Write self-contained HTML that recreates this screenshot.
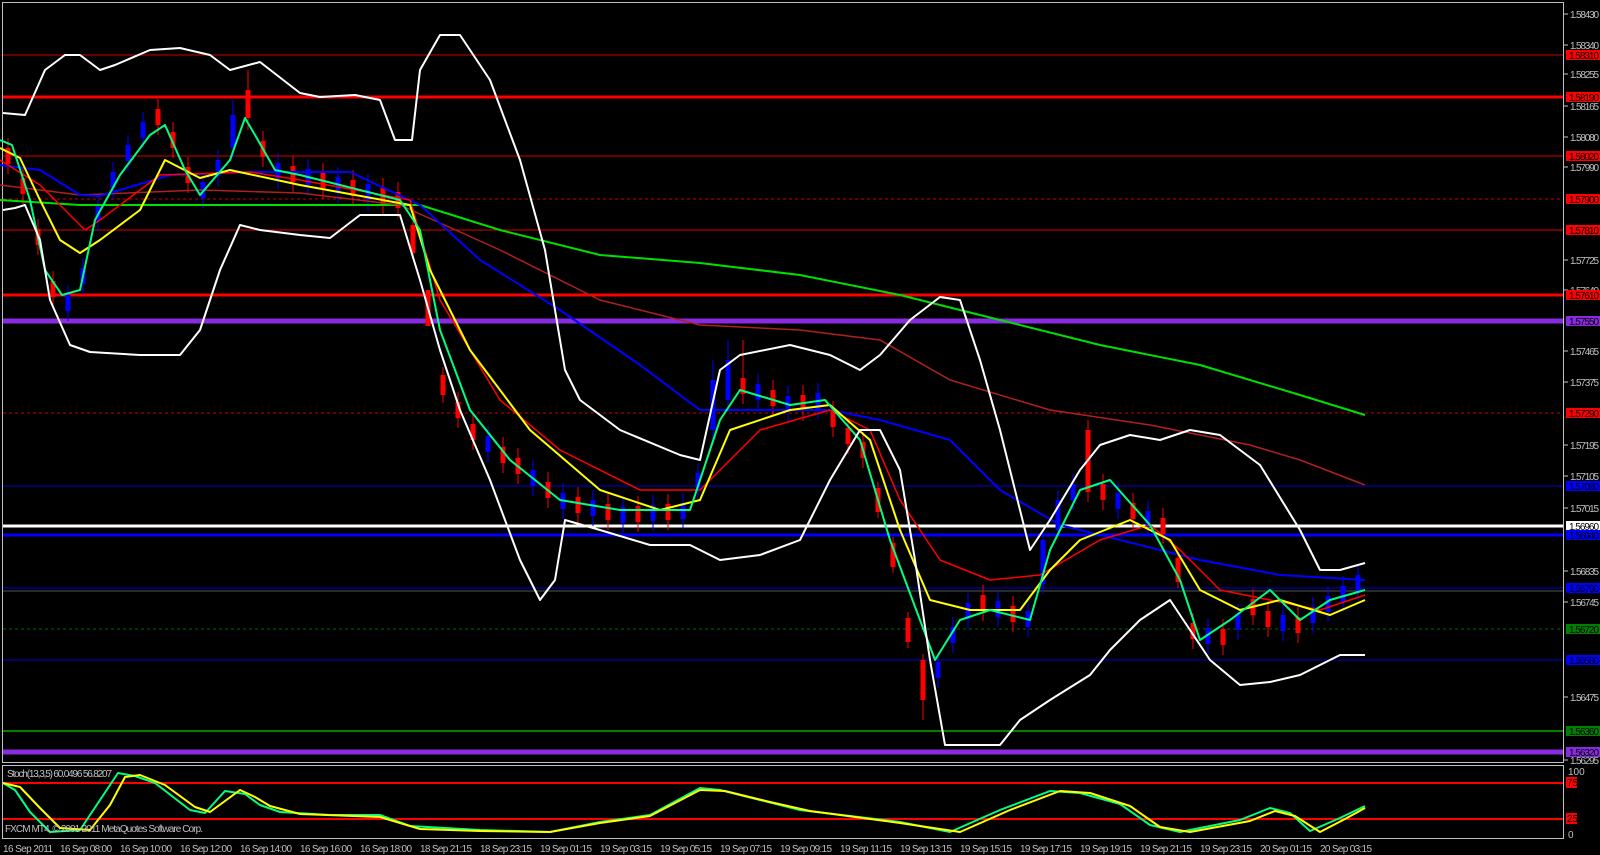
<!DOCTYPE html>
<html><head><meta charset="utf-8"><style>
html,body{margin:0;padding:0;background:#000;width:1600px;height:855px;overflow:hidden}
#w{position:absolute;left:0;top:0;width:1600px;height:855px;overflow:hidden}
svg{display:block}
text{font-family:"Liberation Sans",sans-serif;font-size:10px}
</style></head><body><div id="w">
<svg width="1600" height="855" viewBox="0 0 1600 855" overflow="hidden" xmlns="http://www.w3.org/2000/svg">
<rect width="1600" height="855" fill="#000"/>
<rect x="2.5" y="2.5" width="1561" height="760" fill="none" stroke="#c0c0c0"/>
<rect x="2.5" y="765.5" width="1561" height="73" fill="none" stroke="#c0c0c0"/>
<line x1="3" x2="1563" y1="55" y2="55" stroke="#8b0000" stroke-width="1.5"/>
<line x1="3" x2="1563" y1="97" y2="97" stroke="#ff0000" stroke-width="3"/>
<line x1="3" x2="1563" y1="156" y2="156" stroke="#8b0000" stroke-width="1.5"/>
<line x1="3" x2="1563" y1="199" y2="199" stroke="#c00000" stroke-dasharray="3,3"/>
<line x1="3" x2="1563" y1="230" y2="230" stroke="#e00000"/>
<line x1="3" x2="1563" y1="295" y2="295" stroke="#ff0000" stroke-width="3"/>
<line x1="3" x2="1563" y1="321" y2="321" stroke="#8a2be2" stroke-width="5"/>
<line x1="3" x2="1563" y1="413" y2="413" stroke="#c00000" stroke-dasharray="3,3"/>
<line x1="3" x2="1563" y1="486" y2="486" stroke="#00008b" stroke-width="1.5"/>
<line x1="3" x2="1563" y1="526" y2="526" stroke="#fff" stroke-width="3"/>
<line x1="3" x2="1563" y1="535" y2="535" stroke="#0000ff" stroke-width="3"/>
<line x1="3" x2="1563" y1="588" y2="588" stroke="#00008b" stroke-width="1.5"/>
<line x1="3" x2="1563" y1="591" y2="591" stroke="#555"/>
<line x1="3" x2="1563" y1="629" y2="629" stroke="#006400" stroke-dasharray="3,3"/>
<line x1="3" x2="1563" y1="660" y2="660" stroke="#0000cc"/>
<line x1="3" x2="1563" y1="731" y2="731" stroke="#008000" stroke-width="2"/>
<line x1="3" x2="1563" y1="752" y2="752" stroke="#8a2be2" stroke-width="5"/>
<line x1="3" x2="1563" y1="783" y2="783" stroke="#ff0000" stroke-width="2"/>
<line x1="3" x2="1563" y1="819" y2="819" stroke="#ff0000" stroke-width="2"/>
<path fill="none" stroke="#ff0000" stroke-width="1" d="M8 138V174M23 168V204M38 219V255M53 271V307M158 99V135M173 122V158M188 157V193M248 70V130M263 131V167M293 156V192M323 163V199M353 170V206M383 178V214M398 182V218M413 221V257M428 290V326M443 367V403M458 392V428M473 414V450M503 437V473M518 448V484M548 472V508M578 487V523M608 494V530M638 496V532M668 494V530M743 340V404M773 380V416M803 385V421M833 401V437M848 418V454M863 432V468M878 482V518M893 537V573M908 612V648M923 654V720M983 585V621M1013 596V632M1088 420V502M1103 474V510M1133 493V529M1163 508V544M1178 552V588M1193 613V649M1223 619V655M1253 589V625M1268 601V637M1298 607V643"/>
<path fill="none" stroke="#ff0000" stroke-width="5" d="M8 148V164M23 178V194M38 229V245M53 281V297M158 109V125M173 132V148M188 167V183M248 90V118M263 141V157M293 166V182M323 173V189M353 180V196M383 188V204M398 192V208M413 225V253M428 290V326M443 375V395M458 402V418M473 424V440M503 447V463M518 458V474M548 482V498M578 497V513M608 504V520M638 506V522M668 504V520M743 378V394M773 390V406M803 395V411M833 411V427M848 428V444M863 442V458M878 488V512M893 543V567M908 618V642M923 660V700M983 595V611M1013 606V622M1088 430V492M1103 484V500M1133 503V519M1163 518V534M1178 558V582M1193 623V639M1223 629V645M1253 599V615M1268 611V627M1298 617V633"/>
<path fill="none" stroke="#0000ff" stroke-width="1" d="M68 285V321M83 258V294M98 195V231M113 162V198M128 135V171M143 112V148M203 172V208M218 150V186M233 100V158M278 153V189M308 159V195M338 167V203M368 174V210M488 426V462M533 460V496M563 483V519M593 490V526M623 497V533M653 495V531M683 493V529M698 463V499M713 360V444M728 340V412M758 374V410M788 386V422M818 383V419M938 652V688M953 617V653M968 593V629M998 591V627M1028 601V637M1043 530V594M1058 490V535M1073 474V510M1118 483V519M1148 501V537M1208 618V654M1238 604V640M1283 605V641M1313 597V633M1328 586V622M1343 576V612M1358 565V601"/>
<path fill="none" stroke="#0000ff" stroke-width="5" d="M68 295V311M83 268V284M98 205V221M113 172V188M128 145V161M143 122V138M203 182V198M218 160V176M233 115V148M278 163V179M308 169V185M338 177V193M368 184V200M488 436V452M533 470V486M563 493V509M593 500V516M623 507V523M653 505V521M683 503V519M698 473V489M713 380V430M728 360V400M758 384V400M788 396V412M818 393V409M938 662V678M953 627V643M968 603V619M998 601V617M1028 611V627M1043 540V584M1058 500V530M1073 484V500M1118 493V509M1148 511V527M1208 628V644M1238 614V630M1283 615V631M1313 607V623M1328 596V612M1343 586V602M1358 575V591"/>
<g fill="none" stroke-linejoin="round">
<polyline stroke="#00e000" stroke-width="2" points="0,200 80,205 200,205 350,205 420,205 500,230 600,255 700,263 800,275 900,295 1000,320 1100,345 1200,365 1300,395 1365,415"/>
<polyline stroke="#b02020" stroke-width="1.5" points="0,185 80,195 200,190 300,193 400,205 500,250 600,300 700,325 800,330 880,340 950,380 1050,410 1150,425 1250,445 1300,460 1365,485"/>
<polyline stroke="#0000ff" stroke-width="2" points="0,165 40,170 80,195 100,196 170,175 250,172 350,172 420,205 480,260 560,310 640,365 700,410 760,410 830,410 880,420 950,440 1000,490 1060,525 1120,540 1200,560 1280,575 1365,580"/>
<polyline stroke="#ff0000" stroke-width="1.5" points="0,160 40,185 85,230 100,220 160,175 250,172 300,180 410,200 440,300 500,400 560,450 640,490 700,490 760,430 830,410 870,430 900,500 940,560 990,580 1040,575 1100,540 1150,525 1180,550 1220,590 1270,600 1320,610 1365,595"/>
<polyline stroke="#ffff00" stroke-width="2" points="0,148 20,158 40,200 60,240 80,253 100,240 140,210 165,160 200,178 230,170 300,185 410,205 430,270 470,350 530,430 600,490 660,510 700,500 730,430 790,410 830,405 870,440 900,530 930,600 970,610 1020,610 1050,570 1080,540 1130,520 1170,540 1200,590 1240,610 1280,600 1330,615 1365,600"/>
<polyline stroke="#00ff80" stroke-width="2" points="0,140 12,145 30,200 45,270 62,295 80,290 95,220 120,175 150,135 165,125 185,170 200,195 230,160 245,118 255,135 275,170 300,175 400,200 420,230 440,330 470,410 510,460 560,500 620,510 690,510 720,420 740,390 790,405 825,400 860,440 890,540 920,620 935,660 960,620 990,610 1030,620 1050,550 1080,490 1110,480 1150,525 1180,580 1200,640 1230,620 1270,590 1300,620 1330,600 1365,590"/>
<polyline stroke="#fff" stroke-width="2" points="3,113 25,115 45,70 65,55 80,55 100,70 115,65 150,50 180,48 210,55 230,70 260,62 300,93 320,97 355,95 380,100 395,140 412,140 420,70 440,35 460,35 490,80 520,160 545,250 565,370 580,400 620,430 680,455 700,460 720,370 740,355 790,345 830,355 860,370 880,355 910,320 940,297 960,300 980,360 1000,430 1020,510 1030,550 1050,520 1080,470 1100,445 1130,435 1160,440 1190,430 1220,435 1260,465 1300,530 1320,570 1340,570 1365,563"/>
<polyline stroke="#fff" stroke-width="2" points="3,210 15,208 25,205 40,240 50,300 70,345 90,352 140,355 180,355 200,330 220,270 240,225 260,230 300,235 330,238 360,215 400,215 420,280 440,350 460,410 490,480 520,560 540,600 555,580 565,520 600,530 650,545 690,545 720,560 760,555 800,540 830,480 860,430 880,430 900,470 915,560 930,660 945,745 1000,745 1020,720 1050,700 1090,675 1110,650 1140,620 1170,600 1190,630 1210,660 1240,685 1270,682 1300,675 1340,655 1365,655"/>
<polyline stroke="#00ff80" stroke-width="2" points="3,783 15,790 30,812 50,832 80,830 100,800 118,773 135,776 155,783 190,810 205,813 225,791 245,794 260,805 280,812 330,815 380,815 410,826 480,830 550,832 600,822 650,815 700,788 720,790 760,800 800,810 900,822 950,832 1000,810 1050,791 1080,793 1120,804 1150,825 1180,832 1240,820 1270,808 1290,813 1310,831 1340,818 1365,806"/>
<polyline stroke="#ffff00" stroke-width="2" points="3,783 20,787 40,808 60,828 90,830 110,805 125,777 140,775 165,785 195,807 210,812 240,790 255,797 270,806 300,814 380,817 420,829 480,831 550,832 600,823 650,816 700,790 725,791 770,802 810,811 900,823 960,832 1010,810 1060,791 1090,793 1130,806 1160,827 1190,832 1250,821 1275,811 1295,816 1320,832 1345,819 1365,808"/>
</g>
<text x="7" y="777" fill="#c0c0c0" textLength="105">Stoch(13,3,5) 60.0496 56.8207</text>
<text x="5" y="832" fill="#c0c0c0" textLength="198">FXCM MT4, © 2001-2011 MetaQuotes Software Corp.</text>
<g fill="#c0c0c0">
<path stroke="#c0c0c0" d="M1564 14H1568M1564 45H1568M1564 74H1568M1564 106H1568M1564 137H1568M1564 167H1568M1564 260H1568M1564 290H1568M1564 351H1568M1564 382H1568M1564 445H1568M1564 476H1568M1564 508H1568M1564 571H1568M1564 602H1568M1564 697H1568M1564 760H1568"/>
<text x="1570" y="18" textLength="29">1.58430</text><text x="1570" y="49" textLength="29">1.58340</text><text x="1570" y="78" textLength="29">1.58255</text><text x="1570" y="110" textLength="29">1.58165</text><text x="1570" y="141" textLength="29">1.58080</text><text x="1570" y="171" textLength="29">1.57990</text><text x="1570" y="264" textLength="29">1.57725</text><text x="1570" y="294" textLength="29">1.57640</text><text x="1570" y="355" textLength="29">1.57465</text><text x="1570" y="386" textLength="29">1.57375</text><text x="1570" y="449" textLength="29">1.57195</text><text x="1570" y="480" textLength="29">1.57105</text><text x="1570" y="512" textLength="29">1.57015</text><text x="1570" y="575" textLength="29">1.56835</text><text x="1570" y="606" textLength="29">1.56745</text><text x="1570" y="701" textLength="29">1.56475</text><text x="1570" y="764" textLength="29">1.56295</text>
</g>
<g>
<rect x="1566" y="50" width="34" height="10" fill="#f00"/><text x="1569" y="59" textLength="30">1.58310</text>
<rect x="1566" y="92" width="34" height="10" fill="#f00"/><text x="1569" y="101" textLength="30">1.58190</text>
<rect x="1566" y="151" width="34" height="10" fill="#f00"/><text x="1569" y="160" textLength="30">1.58020</text>
<rect x="1566" y="194" width="34" height="10" fill="#f00"/><text x="1569" y="203" textLength="30">1.57900</text>
<rect x="1566" y="225" width="34" height="10" fill="#f00"/><text x="1569" y="234" textLength="30">1.57810</text>
<rect x="1566" y="290" width="34" height="10" fill="#f00"/><text x="1569" y="299" textLength="30">1.57610</text>
<rect x="1566" y="316" width="34" height="10" fill="#8a2be2"/><text x="1569" y="325" textLength="30">1.57550</text>
<rect x="1566" y="408" width="34" height="10" fill="#f00"/><text x="1569" y="417" textLength="30">1.57290</text>
<rect x="1566" y="481" width="34" height="10" fill="#00f"/><text x="1569" y="490" textLength="30">1.57080</text>
<rect x="1566" y="521" width="34" height="10" fill="#fff"/><text x="1569" y="530" textLength="30">1.56960</text>
<rect x="1566" y="530" width="34" height="10" fill="#00f"/><text x="1569" y="539" textLength="30">1.56940</text>
<rect x="1566" y="583" width="34" height="10" fill="#00f"/><text x="1569" y="592" textLength="30">1.56790</text>
<rect x="1566" y="624" width="34" height="10" fill="#008000"/><text x="1569" y="633" textLength="30">1.56720</text>
<rect x="1566" y="655" width="34" height="10" fill="#00f"/><text x="1569" y="664" textLength="30">1.56580</text>
<rect x="1566" y="726" width="34" height="10" fill="#008000"/><text x="1569" y="735" textLength="30">1.56360</text>
<rect x="1566" y="747" width="34" height="10" fill="#8a2be2"/><text x="1569" y="756" textLength="30">1.56320</text>
<text x="1568" y="775" fill="#c0c0c0">100</text>
<rect x="1566" y="777" width="11" height="11" fill="#f00"/><text x="1567" y="786">75</text>
<rect x="1566" y="813" width="11" height="11" fill="#f00"/><text x="1567" y="822">25</text>
<text x="1568" y="838" fill="#c0c0c0">0</text>
</g>
<g fill="#c0c0c0">
<text x="3" y="852" textLength="50">16 Sep 2011</text><text x="60" y="852" textLength="52">16 Sep 08:00</text><text x="120" y="852" textLength="52">16 Sep 10:00</text><text x="180" y="852" textLength="52">16 Sep 12:00</text><text x="240" y="852" textLength="52">16 Sep 14:00</text><text x="300" y="852" textLength="52">16 Sep 16:00</text><text x="360" y="852" textLength="52">16 Sep 18:00</text><text x="420" y="852" textLength="52">18 Sep 21:15</text><text x="480" y="852" textLength="52">18 Sep 23:15</text><text x="540" y="852" textLength="52">19 Sep 01:15</text><text x="600" y="852" textLength="52">19 Sep 03:15</text><text x="660" y="852" textLength="52">19 Sep 05:15</text><text x="720" y="852" textLength="52">19 Sep 07:15</text><text x="780" y="852" textLength="52">19 Sep 09:15</text><text x="840" y="852" textLength="52">19 Sep 11:15</text><text x="900" y="852" textLength="52">19 Sep 13:15</text><text x="960" y="852" textLength="52">19 Sep 15:15</text><text x="1020" y="852" textLength="52">19 Sep 17:15</text><text x="1080" y="852" textLength="52">19 Sep 19:15</text><text x="1140" y="852" textLength="52">19 Sep 21:15</text><text x="1200" y="852" textLength="52">19 Sep 23:15</text><text x="1260" y="852" textLength="52">20 Sep 01:15</text><text x="1320" y="852" textLength="52">20 Sep 03:15</text>
</g>
</svg>
</div></body></html>
